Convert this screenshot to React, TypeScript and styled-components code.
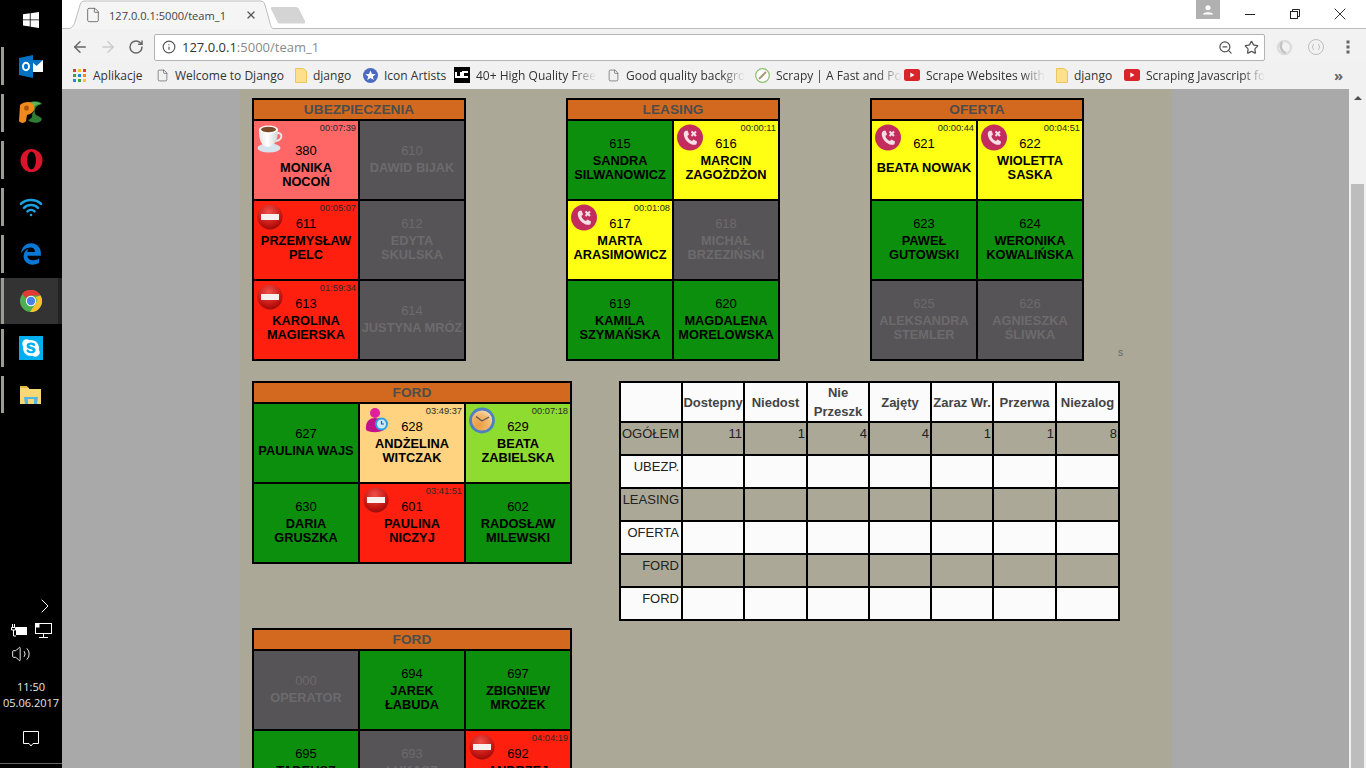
import React from 'react'
import styled, { createGlobalStyle } from 'styled-components'
import { ArrowLeft, ArrowRight, ChevronRight, File, Info, RotateCw, Star, Volume2, Wifi, X, ZoomOut } from 'lucide-react'
import { FaEdgeLegacy, FaSkype } from 'react-icons/fa'

const GlobalStyle = createGlobalStyle`
    html, body {
        margin: 0;
        padding: 0;
        overflow: hidden;
        background: #000;
    }
`

const Screen = styled.div`
    display: flex;
    width: 1366px;
    height: 768px;
    overflow: hidden;
    font-family: "Liberation Sans", Arial, sans-serif;
`

/* ---------- windows taskbar ---------- */

const Taskbar = styled.div`
    display: flex;
    flex-direction: column;
    flex: 0 0 62px;
    background: #000;
    color: #fff;
    font-family: "Open Sans", sans-serif;
`

const TaskItem = styled.div<{ $running?: boolean; $active?: boolean; $h: number }>`
    position: relative;
    display: flex;
    align-items: center;
    justify-content: center;
    box-sizing: border-box;
    height: ${(p) => p.$h}px;
    background: ${(p) => (p.$active ? '#333' : 'transparent')};
    border-right: ${(p) => (p.$active ? '4px solid #222' : 'none')};
    padding-left: ${(p) => (p.$active ? 4 : 0)}px;

    &::before {
        content: '';
        display: ${(p) => (p.$running ? 'block' : 'none')};
        position: absolute;
        left: 1px;
        top: 0;
        bottom: 0;
        width: 3px;
        background: #9e9a94;
    }
`

const TaskGap = styled.div<{ $h: number }>`
    height: ${(p) => p.$h}px;
`

const SkypeTile = styled.div`
    display: flex;
    align-items: center;
    justify-content: center;
    width: 24px;
    height: 24px;
    background: #00aff0;
`

const Tray = styled.div`
    display: flex;
    flex-direction: column;
    align-items: center;
    margin-top: auto;
    position: relative;
    height: 174px;
`

const TrayRow = styled.div<{ $h: number; $justify?: string; $pad?: string }>`
    display: flex;
    align-items: center;
    justify-content: ${(p) => p.$justify || 'center'};
    width: 100%;
    box-sizing: border-box;
    height: ${(p) => p.$h}px;
    padding: ${(p) => p.$pad || 0};
    gap: 8px;
`

const Clock = styled.div`
    width: 100%;
    margin-top: 13px;
    text-align: center;
    font-size: 11px;
    line-height: 16px;
    color: #e6e6e6;
    white-space: nowrap;
`

const BottomLine = styled.div`
    position: absolute;
    left: 0;
    right: 0;
    bottom: 4px;
    height: 1px;
    background: #666;
`

/* ---------- browser chrome ---------- */

const Main = styled.div`
    display: flex;
    flex-direction: column;
    flex: 1;
    min-width: 0;
`

const Chrome = styled.div`
    flex: 0 0 89px;
    display: flex;
    flex-direction: column;
    font-family: "Open Sans", sans-serif;
    color: #333;
`

const TabStrip = styled.div`
    position: relative;
    display: flex;
    flex: 0 0 29px;
    background: #fff;
    border-bottom: 1px solid #bdbdbd;
    box-sizing: border-box;
`

const TabShape = styled.svg`
    position: absolute;
    left: 3px;
    top: 0;
`

const Tab = styled.div`
    position: relative;
    display: flex;
    align-items: center;
    box-sizing: border-box;
    margin-left: 23px;
    width: 176px;
    height: 28px;
    padding-top: 2px;
    font-size: 11.1px;
    color: #444;
    gap: 8px;
`

const TabClose = styled(X)`
    margin-left: 11px;
    flex-shrink: 0;
`

const WindowControls = styled.div`
    display: flex;
    margin-left: auto;
    height: 28px;
    padding-right: 4px;
`

const Profile = styled.div`
    display: flex;
    align-items: center;
    justify-content: center;
    width: 24px;
    height: 19px;
    background: #b0b0b0;
    margin-right: 7px;
`

const WinButton = styled.div`
    display: flex;
    align-items: center;
    justify-content: center;
    width: 45px;
    height: 27px;
`

const Toolbar = styled.div`
    display: flex;
    align-items: center;
    flex: 0 0 32px;
    background: #f2f2f2;
    box-sizing: border-box;
    padding: 4px 0 0 4px;
`

const NavButton = styled.div`
    display: flex;
    align-items: center;
    justify-content: center;
    width: 28px;
    height: 27px;
`

const AddressBar = styled.div`
    display: flex;
    align-items: center;
    box-sizing: border-box;
    width: 1111px;
    height: 27px;
    margin-left: 4px;
    padding: 0 5px 0 7px;
    background: #fff;
    border: 1px solid #b3b3b3;
    border-radius: 2px;
    font-size: 13px;
    color: #333;
`

const Url = styled.span`
    margin-left: 6px;
`

const UrlTail = styled.span`
    color: #8a8a8a;
`

const AddressIcons = styled.div`
    display: flex;
    align-items: center;
    gap: 11px;
    margin-left: auto;
`

const Extension = styled.div<{ $ml: number }>`
    display: flex;
    margin-left: ${(p) => p.$ml}px;
`

const Bookmarks = styled.div`
    display: flex;
    align-items: center;
    flex: 0 0 28px;
    box-sizing: border-box;
    padding-left: 11px;
    background: #f1f1f1;
    font-size: 12px;
    color: #333;
`

const Bookmark = styled.div<{ $w: number }>`
    display: flex;
    align-items: center;
    flex: 0 0 ${(p) => p.$w}px;
    gap: 6px;
    min-width: 0;
`

const BookmarkLabel = styled.span<{ $fade?: boolean }>`
    display: block;
    white-space: nowrap;
    ${(p) =>
        p.$fade
            ? 'mask-image: linear-gradient(to right, #000 80%, transparent 100%); -webkit-mask-image: linear-gradient(to right, #000 80%, transparent 100%);'
            : ''}
`

const MoreBookmarks = styled.div`
    margin-left: 6px;
    font-size: 15px;
    font-weight: 700;
    color: #666;
    line-height: 1;
`

/* ---------- page ---------- */

const Viewport = styled.div`
    display: flex;
    flex: 1;
    min-height: 0;
`

const Page = styled.div`
    flex: 1;
    background: #a9a9a9;
    padding-left: 178px;
    overflow: hidden;
`

const Sheet = styled.div`
    width: 932px;
    height: 100%;
    box-sizing: border-box;
    padding: 9px 0 0 12px;
    background: #aba898;
    overflow: hidden;
`

const Scrollbar = styled.div`
    display: flex;
    flex-direction: column;
    align-items: center;
    flex: 0 0 17px;
    background: #f1f1f1;
`

const ScrollArrow = styled.div`
    width: 0;
    height: 0;
    margin-top: 7px;
    border-left: 4px solid transparent;
    border-right: 4px solid transparent;
    border-bottom: 4px solid #505050;
`

const ScrollThumb = styled.div`
    width: 13px;
    flex: 1;
    margin-top: 84px;
    background: #bdbdbd;
`

const Row = styled.div<{ $mb?: number }>`
    display: flex;
    align-items: flex-start;
    margin-bottom: ${(p) => p.$mb ?? 0}px;
`

const Panel = styled.div<{ $cols: number; $ml?: number }>`
    display: grid;
    grid-template-columns: repeat(${(p) => p.$cols}, 104px);
    grid-auto-rows: 78px;
    grid-template-rows: 19px;
    gap: 2px;
    padding: 2px;
    margin-left: ${(p) => p.$ml ?? 0}px;
    background: #000;
`

const PanelTitle = styled.div<{ $cols: number }>`
    grid-column: span ${(p) => p.$cols};
    background: #d2691e;
    color: #4d4d4d;
    font-size: 13.7px;
    font-weight: 700;
    line-height: 19px;
    text-align: center;
`

type Status = 'free' | 'off' | 'busy' | 'dnd' | 'coffee' | 'wrap' | 'soon'

const statusColors: Record<Status, string> = {
    free: '#0c8f0c',
    off: '#565456',
    busy: '#ffff14',
    dnd: '#ff1f0f',
    coffee: '#ff6666',
    wrap: '#ffd37f',
    soon: '#8fdc30',
}

const Cell = styled.div<{ $status: Status; $low?: boolean }>`
    position: relative;
    box-sizing: border-box;
    padding-top: ${(p) => (p.$low ? 19 : 12)}px;
    text-align: center;
    overflow: hidden;
    background: ${(p) => statusColors[p.$status]};
    color: ${(p) => (p.$status === 'off' ? '#6c6b6c' : '#000')};
`

const Ext = styled.div`
    font-size: 13px;
    line-height: 21px;
`

const Name = styled.div<{ $drop?: boolean }>`
    margin-top: ${(p) => (p.$drop ? 7 : 0)}px;
    font-size: 12.8px;
    font-weight: 700;
    line-height: 14px;
    white-space: pre-line;
`

const Timer = styled.div`
    position: absolute;
    top: 2px;
    right: 2px;
    font-size: 9.3px;
    line-height: 10px;
    color: #2a2a2a;
`

const StatusIcon = styled.svg`
    position: absolute;
    top: 3px;
    left: 3px;
`

const SmallNote = styled.div`
    align-self: flex-end;
    margin: 0 0 2px 34px;
    font-size: 10px;
    line-height: 12px;
    color: #666;
`

const StatsTable = styled.table`
    width: 501px;
    margin-left: 47px;
    table-layout: fixed;
    border-collapse: collapse;
    border: 2px solid #000;
    font-size: 13px;
    color: #222;
`

const Th = styled.th`
    height: 38px;
    padding: 0;
    border: 2px solid #000;
    background: #fbfbfb;
    color: #444;
    font-size: 13px;
    line-height: 19px;
    font-weight: 700;
    text-align: center;
    white-space: nowrap;
`

const Tr = styled.tr<{ $shaded: boolean }>`
    height: 33px;
    background: ${(p) => (p.$shaded ? '#aba898' : '#fbfbfb')};
`

const Td = styled.td`
    padding: 3px 1px 0;
    border: 2px solid #000;
    vertical-align: top;
    text-align: right;
    line-height: 16px;
    white-space: nowrap;

    &:first-child {
        padding-right: 2px;
    }
`

/* ---------- drawn icons ---------- */

const CoffeeIcon = () => (
    <StatusIcon width="26" height="29" viewBox="0 0 26 29">
        <defs>
            <linearGradient id="cupBody" x1="0" x2="1" y1="0" y2="0">
                <stop offset="0%" stopColor="#e6e6e6" />
                <stop offset="45%" stopColor="#ffffff" />
                <stop offset="100%" stopColor="#d2d2d2" />
            </linearGradient>
        </defs>
        <ellipse cx="12" cy="24" rx="11.5" ry="4.5" fill="#d6e4ee" />
        <path d="M2 6 C2 16 4 22 11 23 C18 22 21 16 21 6 Z" fill="url(#cupBody)" />
        <path d="M20 9 C26 8 26 16 19 17" fill="none" stroke="#e6e6e6" strokeWidth="2" />
        <ellipse cx="11.5" cy="5.5" rx="9.5" ry="4" fill="#fff" />
        <ellipse cx="11.5" cy="5.5" rx="7.5" ry="2.8" fill="#7c4a2a" />
    </StatusIcon>
)

const NoEntryIcon = () => (
    <StatusIcon width="26" height="26" viewBox="0 0 26 26">
        <defs>
            <radialGradient id="noEntry" cx="45%" cy="30%" r="75%">
                <stop offset="0%" stopColor="#f0504a" />
                <stop offset="70%" stopColor="#c21410" />
                <stop offset="100%" stopColor="#8a0a08" />
            </radialGradient>
        </defs>
        <circle cx="13" cy="13" r="12.5" fill="url(#noEntry)" />
        <rect x="4" y="10" width="18" height="6" fill="#f6f0ee" />
    </StatusIcon>
)

const PhoneOffIcon = () => (
    <StatusIcon width="26" height="27" viewBox="0 0 26 27">
        <circle cx="13" cy="13.5" r="13" fill="#c22d5e" />
        <path
            d="M8 7 L10.5 6.5 L12 10.5 L10.4 12 C11 14.5 12.5 16 15 17 L16.5 15.4 L20 17.5 L19.5 20 C18 21.5 15 21 12 19 C8.5 16.5 6.5 12.5 6.8 9 Z"
            fill="#f4dfe6"
        />
        <path d="M14.5 7.5 L19 12 M19 7.5 L14.5 12" stroke="#f4dfe6" strokeWidth="2" />
    </StatusIcon>
)

const PersonClockIcon = () => (
    <StatusIcon width="26" height="26" viewBox="-2 0 26 26">
        <circle cx="10" cy="6" r="5" fill="#e01ea0" />
        <path d="M1 23 C0 14 5 11 10 11 C15 11 20 14 19 23 C13 26 6 26 1 23 Z" fill="#c4108a" />
        <circle cx="16.5" cy="17" r="6.5" fill="#2d9ee0" />
        <circle cx="16.5" cy="17" r="4.5" fill="#cdeafa" />
        <path d="M16.5 14 V17 H19" fill="none" stroke="#1a5f9e" strokeWidth="1.2" />
    </StatusIcon>
)

const ClockIcon = () => (
    <StatusIcon width="26" height="27" viewBox="0 0 26 27">
        <defs>
            <radialGradient id="clockFace" cx="35%" cy="70%" r="75%">
                <stop offset="0%" stopColor="#ec9a3e" />
                <stop offset="65%" stopColor="#f2bb74" />
                <stop offset="100%" stopColor="#f6e6c8" />
            </radialGradient>
        </defs>
        <circle cx="13" cy="13.5" r="11.5" fill="url(#clockFace)" stroke="#4e7fbe" strokeWidth="2.8" />
        <path d="M13 14 L7 9.5 M13 14 L20 10" stroke="#555" strokeWidth="1.3" />
    </StatusIcon>
)

const statusIcons = {
    coffee: CoffeeIcon,
    dnd: NoEntryIcon,
    phone: PhoneOffIcon,
    person: PersonClockIcon,
    clock: ClockIcon,
}

const OutlookIcon = () => (
    <svg width="24" height="23" viewBox="0 0 24 23">
        <rect x="11" y="5" width="13" height="12" fill="#fff" />
        <path d="M11 5 H24 L17.5 11 Z" fill="#0a6fc2" />
        <path d="M0 3 L14 0 V23 L0 20 Z" fill="#0072c6" />
        <ellipse cx="7" cy="11.5" rx="3" ry="3.8" fill="none" stroke="#fff" strokeWidth="2" />
    </svg>
)

const PyCharmIcon = () => (
    <svg width="24" height="24" viewBox="0 0 24 24">
        <path d="M9 2 C14 -1 22 0 23 3 C20 4 17 5 16 8 C15 11 16 14 19 15 C22 16 24 18 22 20 C19 23 12 22 9 19 C12 18 14 16 13 13 C17 9 14 5 9 2 Z" fill="#2f7d33" />
        <path d="M11 2 C15 0 20 1 22 3 C19 3 16 4 15 6 Z" fill="#5cb85a" />
        <path d="M1 4 C4 1 10 0 13 2 C17 5 16 11 11 13 L8 14 L7 20 C5 23 1 22 0 20 Z" fill="#f08a1c" />
        <ellipse cx="7.5" cy="7" rx="2.4" ry="2.6" fill="#a8560c" />
    </svg>
)

const OperaIcon = () => (
    <svg width="23" height="23" viewBox="0 0 23 23">
        <ellipse cx="11.5" cy="11.5" rx="11" ry="11.5" fill="#d9142b" />
        <ellipse cx="11.5" cy="11.5" rx="4.5" ry="9" fill="#000" />
    </svg>
)

const ChromeIcon = () => (
    <svg width="22" height="22" viewBox="0 0 22 22">
        <circle cx="11" cy="11" r="11" fill="#4caf50" />
        <path d="M11 0 A11 11 0 0 1 20.5 5.5 L11 5.5 A5.5 5.5 0 0 0 6 8.2 L2 3.5 A11 11 0 0 1 11 0 Z" fill="#e53935" />
        <path d="M20.5 5.5 A11 11 0 0 1 10 22 L15.5 14 A5.5 5.5 0 0 0 15.5 7 Z" fill="#fbc02d" />
        <circle cx="11" cy="11" r="5.2" fill="#fff" />
        <circle cx="11" cy="11" r="4.2" fill="#4d7fe8" />
    </svg>
)

const FilesIcon = () => (
    <svg width="22" height="19" viewBox="0 0 22 19">
        <path d="M0 2 H8 L9.5 4 H21 V19 H0 Z" fill="#f8d775" />
        <path d="M0 1 H7 L8 3 H0 Z" fill="#e5b83f" />
        <path d="M4 12 L5 19 H17 L18 12 Z" fill="#58b4e0" />
        <rect x="8" y="14" width="6" height="5" fill="#f8d775" />
    </svg>
)

const WindowsLogo = () => (
    <svg width="16" height="16" viewBox="0 0 16 16" fill="#fff">
        <path d="M0 2.3 L6.8 1.3 V7.5 H0 Z M7.6 1.2 L16 0 V7.5 H7.6 Z M0 8.3 H6.8 V14.6 L0 13.6 Z M7.6 8.3 H16 V16 L7.6 14.8 Z" />
    </svg>
)

const BatteryIcon = () => (
    <svg width="16" height="13" viewBox="0 0 16 13" fill="none" stroke="#fff">
        <path d="M1.5 0 V3 M3.5 0 V3 M0.5 3.5 H4.5 V6 H0.5 Z M2.5 6 V12 H5" />
        <rect x="5.5" y="3.5" width="10" height="7" fill="#fff" />
    </svg>
)

const NetworkIcon = () => (
    <svg width="17" height="15" viewBox="0 0 17 15" fill="none" stroke="#fff">
        <rect x="0.5" y="0.5" width="16" height="10" />
        <path d="M8.5 11 V14 M4 14.5 H13" />
        <rect x="0.5" y="0.5" width="3.5" height="3.5" fill="#fff" />
    </svg>
)

const ActionCenterIcon = () => (
    <svg width="16" height="16" viewBox="0 0 16 16" fill="none" stroke="#fff">
        <path d="M0.5 0.5 H15.5 V12.5 H10 L8 15 L6 12.5 H0.5 Z" />
    </svg>
)

const AppsIcon = () => (
    <svg width="14" height="13" viewBox="0 0 14 13">
        {['#e53935', '#fbc02d', '#e53935', '#43a047', '#1e88e5', '#fb8c00', '#1e88e5', '#43a047', '#fbc02d'].map((c, i) => (
            <rect key={i} x={(i % 3) * 5} y={Math.floor(i / 3) * 5} width="3" height="3" fill={c} />
        ))}
    </svg>
)

const FolderIcon = () => (
    <svg width="12" height="15" viewBox="0 0 12 15">
        <path d="M0.5 0.5 H8 L11.5 3 V14.5 H0.5 Z" fill="#fce08c" stroke="#ecc65c" />
    </svg>
)

const StarBadgeIcon = () => (
    <svg width="15" height="15" viewBox="0 0 15 15">
        <circle cx="7.5" cy="7.5" r="7.5" fill="#4a6cc0" />
        <path d="M7.5 2.5 L9 6 L12.7 6.2 L9.8 8.5 L10.8 12 L7.5 10 L4.2 12 L5.2 8.5 L2.3 6.2 L6 6 Z" fill="#fff" />
    </svg>
)

const UcIcon = () => (
    <svg width="16" height="16" viewBox="0 0 16 16">
        <rect width="16" height="16" fill="#000" />
        <path d="M2 5 V10 H7 V5 M14 5 H9 V10 H14" fill="none" stroke="#fff" strokeWidth="2" />
    </svg>
)

const ScrapyIcon = () => (
    <svg width="15" height="15" viewBox="0 0 15 15">
        <circle cx="7.5" cy="7.5" r="6.8" fill="#fff" stroke="#8cbf6a" strokeWidth="1.2" />
        <path d="M4 11 L11 4" stroke="#a89a80" strokeWidth="2" />
    </svg>
)

const YoutubeIcon = () => (
    <svg width="16" height="12" viewBox="0 0 16 12">
        <rect width="16" height="12" rx="2.5" fill="#d9252a" />
        <path d="M6.3 3.5 L10.5 6 L6.3 8.5 Z" fill="#fff" />
    </svg>
)

const RestoreIcon = () => (
    <svg width="10" height="10" viewBox="0 0 10 10" fill="none" stroke="#222">
        <rect x="0.5" y="2.5" width="7" height="7" />
        <path d="M2.5 2.5 V0.5 H9.5 V7.5 H7.5" />
    </svg>
)

const MinimizeIcon = () => (
    <svg width="10" height="10" viewBox="0 0 10 10">
        <rect y="5" width="10" height="1" fill="#222" />
    </svg>
)

const ProfileIcon = () => (
    <svg width="10" height="10" viewBox="0 0 10 10" fill="#fff">
        <circle cx="5" cy="2.7" r="2.5" />
        <path d="M0 9.5 C0 6.5 10 6.5 10 9.5 Z" />
    </svg>
)

const SwirlIcon = () => (
    <svg width="17" height="17" viewBox="0 0 17 17" fill="none" stroke="#dcdcdc" strokeWidth="2.5">
        <circle cx="8.5" cy="8.5" r="6.5" />
        <path d="M6 3 C3 8 6 13 10 14" stroke="#c4c4c4" />
    </svg>
)

const BracesIcon = () => (
    <svg width="16" height="16" viewBox="0 0 16 16" fill="none" stroke="#bdbdbd">
        <circle cx="8" cy="8" r="7.5" />
        <path d="M6 5 C4.5 5 5.5 8 4 8 C5.5 8 4.5 11 6 11 M10 5 C11.5 5 10.5 8 12 8 C10.5 8 11.5 11 10 11" />
    </svg>
)

const KebabIcon = () => (
    <svg width="4" height="14" viewBox="0 0 4 14" fill="#666">
        <rect x="0.5" y="0.5" width="3" height="3" />
        <rect x="0.5" y="5.5" width="3" height="3" />
        <rect x="0.5" y="10.5" width="3" height="3" />
    </svg>
)

/* ---------- data ---------- */

type Agent = {
    ext: string
    name: string
    status: Status
    low?: boolean
    drop?: boolean
    time?: string
    icon?: keyof typeof statusIcons
}

const ubezpieczenia: Agent[] = [
    { ext: '380', name: 'MONIKA\nNOCOŃ', status: 'coffee', low: true, time: '00:07:39', icon: 'coffee' },
    { ext: '610', name: 'DAWID BIJAK', status: 'off', low: true },
    { ext: '611', name: 'PRZEMYSŁAW\nPELC', status: 'dnd', time: '00:05:07', icon: 'dnd' },
    { ext: '612', name: 'EDYTA\nSKULSKA', status: 'off' },
    { ext: '613', name: 'KAROLINA\nMAGIERSKA', status: 'dnd', time: '01:59:34', icon: 'dnd' },
    { ext: '614', name: 'JUSTYNA MRÓZ', status: 'off', low: true },
]

const leasing: Agent[] = [
    { ext: '615', name: 'SANDRA\nSILWANOWICZ', status: 'free' },
    { ext: '616', name: 'MARCIN\nZAGOŻDŻON', status: 'busy', time: '00:00:11', icon: 'phone' },
    { ext: '617', name: 'MARTA\nARASIMOWICZ', status: 'busy', time: '00:01:08', icon: 'phone' },
    { ext: '618', name: 'MICHAŁ\nBRZEZIŃSKI', status: 'off' },
    { ext: '619', name: 'KAMILA\nSZYMAŃSKA', status: 'free' },
    { ext: '620', name: 'MAGDALENA\nMORELOWSKA', status: 'free' },
]

const oferta: Agent[] = [
    { ext: '621', name: 'BEATA NOWAK', status: 'busy', drop: true, time: '00:00:44', icon: 'phone' },
    { ext: '622', name: 'WIOLETTA\nSASKA', status: 'busy', time: '00:04:51', icon: 'phone' },
    { ext: '623', name: 'PAWEŁ\nGUTOWSKI', status: 'free' },
    { ext: '624', name: 'WERONIKA\nKOWALIŃSKA', status: 'free' },
    { ext: '625', name: 'ALEKSANDRA\nSTEMLER', status: 'off' },
    { ext: '626', name: 'AGNIESZKA\nŚLIWKA', status: 'off' },
]

const fordOne: Agent[] = [
    { ext: '627', name: 'PAULINA WAJS', status: 'free', low: true },
    { ext: '628', name: 'ANDŻELINA\nWITCZAK', status: 'wrap', time: '03:49:37', icon: 'person' },
    { ext: '629', name: 'BEATA\nZABIELSKA', status: 'soon', time: '00:07:18', icon: 'clock' },
    { ext: '630', name: 'DARIA\nGRUSZKA', status: 'free' },
    { ext: '601', name: 'PAULINA\nNICZYJ', status: 'dnd', time: '03:41:51', icon: 'dnd' },
    { ext: '602', name: 'RADOSŁAW\nMILEWSKI', status: 'free' },
]

const fordTwo: Agent[] = [
    { ext: '000', name: 'OPERATOR', status: 'off', low: true },
    { ext: '694', name: 'JAREK\nŁABUDA', status: 'free' },
    { ext: '697', name: 'ZBIGNIEW\nMROŻEK', status: 'free' },
    { ext: '695', name: 'TADEUSZ', status: 'free' },
    { ext: '693', name: 'ŁUKASZ', status: 'off' },
    { ext: '692', name: 'ANDRZEJ', status: 'dnd', time: '04:04:19', icon: 'dnd' },
]

const statColumns = ['Dostepny', 'Niedost', 'Nie\nPrzeszk', 'Zajęty', 'Zaraz Wr.', 'Przerwa', 'Niezalog']
const statWidths = [62, 62, 63, 62, 62, 62, 63, 63]
const statRows = [
    { label: 'OGÓŁEM', values: ['11', '1', '4', '4', '1', '1', '8'] },
    { label: 'UBEZP.', values: [] },
    { label: 'LEASING', values: [] },
    { label: 'OFERTA', values: [] },
    { label: 'FORD', values: [] },
    { label: 'FORD', values: [] },
]

const bookmarks = [
    { w: 83, icon: <AppsIcon />, label: 'Aplikacje' },
    { w: 139, icon: <File size={13} strokeWidth={1.2} color="#555" />, label: 'Welcome to Django' },
    { w: 68, icon: <FolderIcon />, label: 'django' },
    { w: 91, icon: <StarBadgeIcon />, label: 'Icon Artists' },
    { w: 153, icon: <UcIcon />, label: '40+ High Quality Free', fade: true },
    { w: 148, icon: <File size={13} strokeWidth={1.2} color="#555" />, label: 'Good quality backgro', fade: true },
    { w: 149, icon: <ScrapyIcon />, label: 'Scrapy | A Fast and Po', fade: true },
    { w: 152, icon: <YoutubeIcon />, label: 'Scrape Websites with', fade: true },
    { w: 68, icon: <FolderIcon />, label: 'django' },
    { w: 204, icon: <YoutubeIcon />, label: 'Scraping Javascript fo', fade: true },
]

const taskIcons = [
    <OutlookIcon />,
    <PyCharmIcon />,
    <OperaIcon />,
    <Wifi size={24} color="#1ba1e2" strokeWidth={2.6} />,
    <FaEdgeLegacy size={22} color="#0a78d7" />,
]

/* ---------- components ---------- */

const AgentCell = ({ agent }: { agent: Agent }) => {
    const Icon = agent.icon && statusIcons[agent.icon]

    return (
        <Cell $status={agent.status} $low={agent.low}>
            {Icon && <Icon />}
            {agent.time && <Timer>{agent.time}</Timer>}
            <Ext>{agent.ext}</Ext>
            <Name $drop={agent.drop}>{agent.name}</Name>
        </Cell>
    )
}

const Team = ({ title, cols, agents, ml }: { title: string; cols: number; agents: Agent[]; ml?: number }) => (
    <Panel $cols={cols} $ml={ml}>
        <PanelTitle $cols={cols}>{title}</PanelTitle>
        {agents.map((agent) => (
            <AgentCell key={agent.ext} agent={agent} />
        ))}
    </Panel>
)

const Stats = () => (
    <StatsTable>
        <colgroup>
            {statWidths.map((w, i) => (
                <col key={i} width={w} />
            ))}
        </colgroup>
        <thead>
            <tr>
                <Th />
                {statColumns.map((c) => (
                    <Th key={c}>
                        {c.split('\n').map((line) => (
                            <div key={line}>{line}</div>
                        ))}
                    </Th>
                ))}
            </tr>
        </thead>
        <tbody>
            {statRows.map((row, r) => (
                <Tr key={r} $shaded={r % 2 === 0}>
                    <Td>{row.label}</Td>
                    {statColumns.map((c, i) => (
                        <Td key={c}>{row.values[i]}</Td>
                    ))}
                </Tr>
            ))}
        </tbody>
    </StatsTable>
)

const BrowserChrome = () => (
    <Chrome>
        <TabStrip>
            <TabShape width="241" height="29" viewBox="0 0 241 29">
                <path d="M1 29 C6 29 9 26 10 22 L15 5 C16 2 17 1 20 1 L195 1 C198 1 199 2 200 5 L205 23 C206 27 207 29 210 29" fill="#f5f5f5" stroke="#bdbdbd" />
                <path d="M206 9 C205.5 7.5 206 7 208 7 L231 7 C232.5 7 233.5 8 234 9 L240 21 C240.5 23 240 23.5 238 23.5 L215 23.5 C213.5 23.5 213 23 212.5 22 Z" fill="#d4d4d4" />
            </TabShape>
            <Tab>
                <File size={16} strokeWidth={1.2} color="#555" />
                <span>127.0.0.1:5000/team_1</span>
                <TabClose size={12} strokeWidth={2.6} color="#555" />
            </Tab>
            <WindowControls>
                <Profile>
                    <ProfileIcon />
                </Profile>
                <WinButton>
                    <MinimizeIcon />
                </WinButton>
                <WinButton>
                    <RestoreIcon />
                </WinButton>
                <WinButton>
                    <X size={20} strokeWidth={1.1} color="#222" />
                </WinButton>
            </WindowControls>
        </TabStrip>
        <Toolbar>
            <NavButton>
                <ArrowLeft size={18} color="#666" strokeWidth={2} />
            </NavButton>
            <NavButton>
                <ArrowRight size={18} color="#ccc" strokeWidth={2} />
            </NavButton>
            <NavButton>
                <RotateCw size={16} color="#666" strokeWidth={2.2} />
            </NavButton>
            <AddressBar>
                <Info size={14} color="#555" />
                <Url>
                    127.0.0.1<UrlTail>:5000/team_1</UrlTail>
                </Url>
                <AddressIcons>
                    <ZoomOut size={15} color="#555" />
                    <Star size={15} color="#555" strokeWidth={2} />
                </AddressIcons>
            </AddressBar>
            <Extension $ml={11}>
                <SwirlIcon />
            </Extension>
            <Extension $ml={15}>
                <BracesIcon />
            </Extension>
            <Extension $ml={22}>
                <KebabIcon />
            </Extension>
        </Toolbar>
        <Bookmarks>
            {bookmarks.map((b, i) => (
                <Bookmark key={i} $w={b.w}>
                    {b.icon}
                    <BookmarkLabel $fade={b.fade}>{b.label}</BookmarkLabel>
                </Bookmark>
            ))}
            <MoreBookmarks>»</MoreBookmarks>
        </Bookmarks>
    </Chrome>
)

const WindowsTaskbar = () => (
    <Taskbar>
        <TaskItem $h={39}>
            <WindowsLogo />
        </TaskItem>
        <TaskGap $h={8} />
        {taskIcons.map((icon, i) => (
            <React.Fragment key={i}>
                <TaskItem $running $h={38}>
                    {icon}
                </TaskItem>
                <TaskGap $h={i === 4 ? 5 : 9} />
            </React.Fragment>
        ))}
        <TaskItem $running $active $h={46}>
            <ChromeIcon />
        </TaskItem>
        <TaskGap $h={5} />
        <TaskItem $running $h={38}>
            <SkypeTile>
                <FaSkype size={20} color="#fff" />
            </SkypeTile>
        </TaskItem>
        <TaskGap $h={9} />
        <TaskItem $running $h={37}>
            <FilesIcon />
        </TaskItem>
        <Tray>
            <TrayRow $h={24} $justify="flex-end" $pad="0 5px 0 0">
                <ChevronRight size={24} strokeWidth={1} color="#fff" />
            </TrayRow>
            <TrayRow $h={24}>
                <BatteryIcon />
                <NetworkIcon />
            </TrayRow>
            <TrayRow $h={24} $justify="flex-start" $pad="0 0 0 11px">
                <Volume2 size={20} strokeWidth={1.1} color="#fff" />
            </TrayRow>
            <Clock>
                <div>11:50</div>
                <div>05.06.2017</div>
            </Clock>
            <TrayRow $h={55}>
                <ActionCenterIcon />
            </TrayRow>
            <BottomLine />
        </Tray>
    </Taskbar>
)

export default function App() {
    return (
        <Screen>
            <GlobalStyle />
            <WindowsTaskbar />
            <Main>
                <BrowserChrome />
                <Viewport>
                    <Page>
                        <Sheet>
                            <Row $mb={20}>
                                <Team title="UBEZPIECZENIA" cols={2} agents={ubezpieczenia} />
                                <Team title="LEASING" cols={2} agents={leasing} ml={100} />
                                <Team title="OFERTA" cols={2} agents={oferta} ml={90} />
                                <SmallNote>s</SmallNote>
                            </Row>
                            <Row $mb={7}>
                                <Team title="FORD" cols={3} agents={fordOne} />
                                <Stats />
                            </Row>
                            <Row>
                                <Team title="FORD" cols={3} agents={fordTwo} />
                            </Row>
                        </Sheet>
                    </Page>
                    <Scrollbar>
                        <ScrollArrow />
                        <ScrollThumb />
                    </Scrollbar>
                </Viewport>
            </Main>
        </Screen>
    )
}
